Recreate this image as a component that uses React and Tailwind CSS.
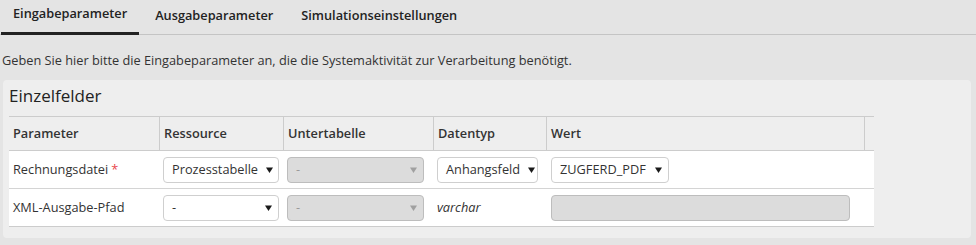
const TABS = ["Eingabeparameter", "Ausgabeparameter", "Simulationseinstellungen"]

function Arrow({ disabled }) {
  return (
    <svg width="7" height="6" viewBox="0 0 7 6" className="shrink-0">
      <path d="M0 0.5 H7 L3.5 6 Z" fill={disabled ? "#a0a0a0" : "#1a1a1a"} />
    </svg>
  )
}

function Select({ value, width, disabled }) {
  return (
    <div
      className={`flex h-[26px] items-center justify-between gap-2 rounded-[4px] border pl-[8px] pr-[6px] ${width} ${
        disabled ? "border-[#bdbdbd] bg-[#dcdcdc] text-[#9a9a9a]" : "border-[#cfcfcf] bg-white text-[#333]"
      }`}
    >
      <span className="whitespace-nowrap">{value}</span>
      <Arrow disabled={disabled} />
    </div>
  )
}

export default function App() {
  return (
    <div className="h-[245px] w-[976px] bg-[#e4e4e4] font-['Open_Sans',sans-serif] text-[12.75px] text-[#333]">
      {/* tabs */}
      <div className="flex h-[35px] gap-1 border-b border-[#c4c4c4] pl-[1px]">
        {TABS.map((t, i) => (
          <div
            key={t}
            className={`flex h-[35px] items-center px-3 pb-[4px] text-[12.75px] font-semibold text-[#222] ${
              i === 0 ? "border-b-[3px] border-[#222]" : ""
            }`}
          >
            {t}
          </div>
        ))}
      </div>

      <p className="pl-[2px] pt-[17px] text-[12.75px] leading-[16px] text-[#333]">
        Geben Sie hier bitte die Eingabeparameter an, die die Systemaktivität zur Verarbeitung benötigt.
      </p>

      {/* panel */}
      <div className="ml-[3px] mr-[5px] mt-[12px] h-[158px] rounded-[4px] bg-[#eeeeee] pl-[6px] pr-[97px] pt-[6px]">
        <h2 className="text-[17px] leading-[20px] text-[#222]">Einzelfelder</h2>

        <div className="mt-[10px] border-b border-t border-[#cccccc]">
          {/* header */}
          <div className="flex h-[34px] items-center border-b border-[#cccccc] font-semibold text-[#333]">
            <div className="flex h-full w-[150px] items-center pl-[4px]">Parameter</div>
            <div className="flex h-full w-[124px] items-center border-l border-[#cccccc] pl-[4px]">Ressource</div>
            <div className="flex h-full w-[150px] items-center border-l border-[#cccccc] pl-[4px]">Untertabelle</div>
            <div className="flex h-full w-[113px] items-center border-l border-[#cccccc] pl-[4px]">Datentyp</div>
            <div className="flex h-full w-[318px] items-center border-l border-[#cccccc] pl-[4px]">Wert</div>
            <div className="h-full flex-1 border-l border-[#cccccc]" />
          </div>

          {/* row 1 */}
          <div className="flex h-[38px] items-center border-b border-[#d4d4d4] bg-white">
            <div className="w-[150px] pl-[4px]">
              Rechnungsdatei<span className="ml-[3px] text-[#e8484d]">*</span>
            </div>
            <div className="w-[124px] pl-[4px]">
              <Select value="Prozesstabelle" width="w-[116px]" />
            </div>
            <div className="w-[150px] pl-[4px]">
              <Select value="-" width="w-[137px]" disabled />
            </div>
            <div className="w-[113px] pl-[4px]">
              <Select value="Anhangsfeld" width="w-[101px]" />
            </div>
            <div className="flex-1 pl-[5px]">
              <Select value="ZUGFERD_PDF" width="w-[118px]" />
            </div>
          </div>

          {/* row 2 */}
          <div className="flex h-[37px] items-center bg-white">
            <div className="w-[150px] pl-[4px]">XML-Ausgabe-Pfad</div>
            <div className="w-[124px] pl-[4px]">
              <Select value="-" width="w-[116px]" />
            </div>
            <div className="w-[150px] pl-[4px]">
              <Select value="-" width="w-[137px]" disabled />
            </div>
            <div className="w-[113px] pl-[4px] italic">varchar</div>
            <div className="flex-1 pl-[5px]">
              <div className="h-[26px] w-[299px] rounded-[4px] border border-[#bdbdbd] bg-[#dcdcdc]" />
            </div>
          </div>
        </div>
      </div>
    </div>
  )
}
